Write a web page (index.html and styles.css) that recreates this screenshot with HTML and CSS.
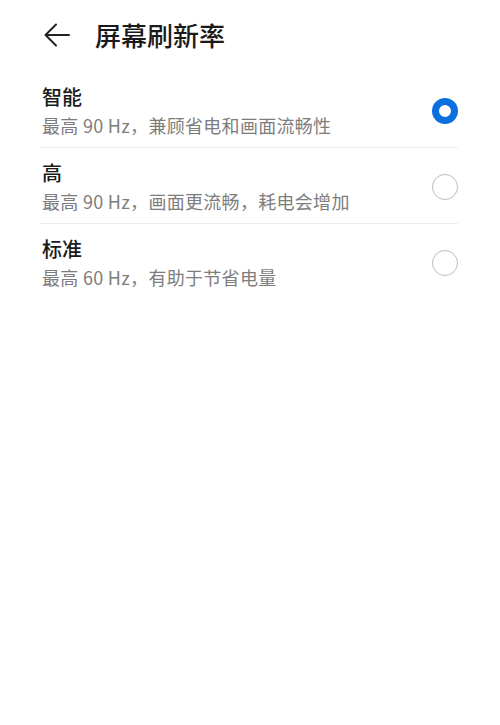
FILE: index.html
```html
<!DOCTYPE html>
<html lang="zh-CN">
<head>
    <meta charset="UTF-8">
    <meta name="viewport" content="width=device-width, initial-scale=1.0">
    <title>屏幕刷新率</title>
    <link rel="stylesheet" href="styles.css">
</head>
<body>
    <header class="top-bar">
        <svg class="back" width="26" height="24" viewBox="0 0 26 24">
            <path d="M25 12H2M12 1.5L1.5 12L12 22.5" fill="none" stroke="#222" stroke-width="2" stroke-linecap="round" stroke-linejoin="round"/>
        </svg>
        <h1>屏幕刷新率</h1>
    </header>

    <ul class="options">
        <li class="option">
            <div class="text">
                <div class="name">智能</div>
                <div class="desc">最高 90 Hz，兼顾省电和画面流畅性</div>
            </div>
            <span class="radio checked"></span>
        </li>
        <li class="option">
            <div class="text">
                <div class="name">高</div>
                <div class="desc">最高 90 Hz，画面更流畅，耗电会增加</div>
            </div>
            <span class="radio"></span>
        </li>
        <li class="option">
            <div class="text">
                <div class="name">标准</div>
                <div class="desc">最高 60 Hz，有助于节省电量</div>
            </div>
            <span class="radio"></span>
        </li>
    </ul>
</body>
</html>
```

FILE: styles.css
```css
body {
    margin: 0;
    background: #fff;
    font-family: "Noto Sans CJK SC", "Noto Sans", sans-serif;
    color: #1a1a1a;
}
.top-bar {
    display: flex;
    align-items: center;
    gap: 25px;
    height: 72px;
    padding: 0 0 2px 44px;
    box-sizing: border-box;
}
.top-bar h1 {
    margin: 0;
    font-size: 26px;
    font-weight: 500;
    line-height: 34px;
}
.options {
    list-style: none;
    margin: 0 42px 0 41px;
    padding: 0;
}
.option {
    display: flex;
    align-items: center;
    justify-content: space-between;
    padding: 12px 0 10px 1px;
    border-bottom: 1px solid #ececec;
}
.option:last-child {
    border-bottom: none;
}
.name {
    font-size: 20px;
    line-height: 26px;
    font-weight: 500;
}
.desc {
    margin-top: 3px;
    font-size: 18px;
    line-height: 24px;
    letter-spacing: 0.3px;
    color: #7d7d7d;
}
.radio {
    width: 26px;
    height: 26px;
    box-sizing: border-box;
    border: 1.5px solid #bdbdbd;
    border-radius: 50%;
}
.radio.checked {
    border: 7.5px solid #0b6fdf;
}
```
